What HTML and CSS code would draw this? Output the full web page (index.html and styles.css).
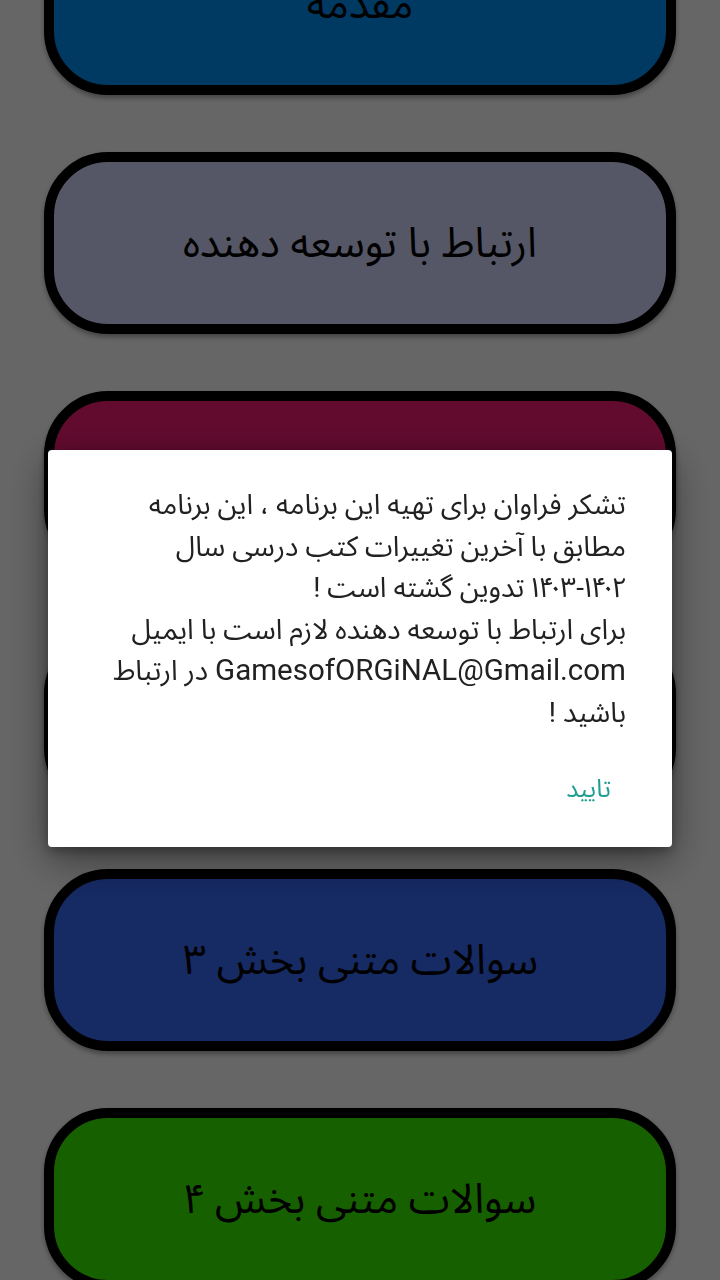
FILE: index.html
```html
<!DOCTYPE html>
<html lang="fa" dir="rtl">
<head>
<meta charset="utf-8">
<title>Dialog</title>
<link rel="stylesheet" href="styles.css">
</head>
<body>
<main class="list">
  <button class="menu-btn c-blue">مقدمه</button>
  <button class="menu-btn c-lavender">ارتباط با توسعه دهنده</button>
  <button class="menu-btn c-pink">سوالات متنی بخش ۱</button>
  <button class="menu-btn c-orange">سوالات متنی بخش ۲</button>
  <button class="menu-btn c-navy">سوالات متنی بخش ۳</button>
  <button class="menu-btn c-green">سوالات متنی بخش ۴</button>
</main>
<div class="scrim">
  <div class="dialog" role="dialog">
    <p class="message">تشکر فراوان برای تهیه این برنامه ، این برنامه<br>مطابق با آخرین تغییرات کتب درسی سال<br>۱۴۰۳-۱۴۰۲ تدوین گشته است !<br>برای ارتباط با توسعه دهنده لازم است با ایمیل<br><span class="email">GamesofORGiNAL@Gmail.com</span> در ارتباط<br>باشید !</p>
    <div class="actions">
      <button class="ok">تایید</button>
    </div>
  </div>
</div>
</body>
</html>
```
FILE: styles.css
```css
html, body {
  margin: 0;
  padding: 0;
}
body {
  width: 720px;
  height: 1280px;
  overflow: hidden;
  background: #ffffff;
  font-family: Roboto, "Noto Sans Arabic UI", "Noto Sans Arabic", "Noto Naskh Arabic UI", "Noto Naskh Arabic", "DejaVu Sans", sans-serif;
}
.list {
  display: flex;
  flex-direction: column;
  gap: 57px;
  padding: 0 44px;
  margin-top: -87px;
}
.menu-btn {
  height: 182px;
  box-sizing: border-box;
  border: 10.5px solid #000;
  border-radius: 64px;
  display: flex;
  align-items: center;
  justify-content: center;
  font-family: "Noto Sans Arabic UI", "Noto Sans Arabic", "Noto Naskh Arabic UI", "DejaVu Sans", sans-serif;
  font-size: 41.5px;
  color: #000;
  box-shadow: 0 3px 5px rgba(0,0,0,0.35);
  padding: 0 0 4px;
}
.c-blue { background: #0092f8; }
.c-lavender { background: #d7daff; }
.c-pink { background: #f51c76; }
.c-orange { background: #ff9800; }
.c-navy { background: #3769f8; }
.c-green { background: #37f000; }

.scrim {
  position: fixed;
  inset: 0;
  background: rgba(0,0,0,0.6);
  display: flex;
  justify-content: center;
  align-items: flex-start;
  padding-top: 450px;
}
.dialog {
  width: 624px;
  height: 397px;
  box-sizing: border-box;
  background: #fff;
  border-radius: 4px;
  box-shadow: 0 12px 40px rgba(0,0,0,0.45), 0 4px 12px rgba(0,0,0,0.3);
  padding: 34px 46px 0 46px;
  display: flex;
  flex-direction: column;
}
.message {
  margin: 0;
  font-size: 28px;
  line-height: 41.5px;
  color: #212121;
  text-align: right;
}
.email {
  font-size: 29.5px;
}
.actions {
  flex: 1;
  display: flex;
  justify-content: flex-start;
  align-items: center;
  padding-bottom: 6px;
}
.ok {
  background: none;
  border: 0;
  padding: 8px 15px;
  font-family: Roboto, "Noto Sans Arabic UI", "Noto Sans Arabic", "DejaVu Sans", sans-serif;
  font-size: 25px;
  color: #1f9e91;
}
```
